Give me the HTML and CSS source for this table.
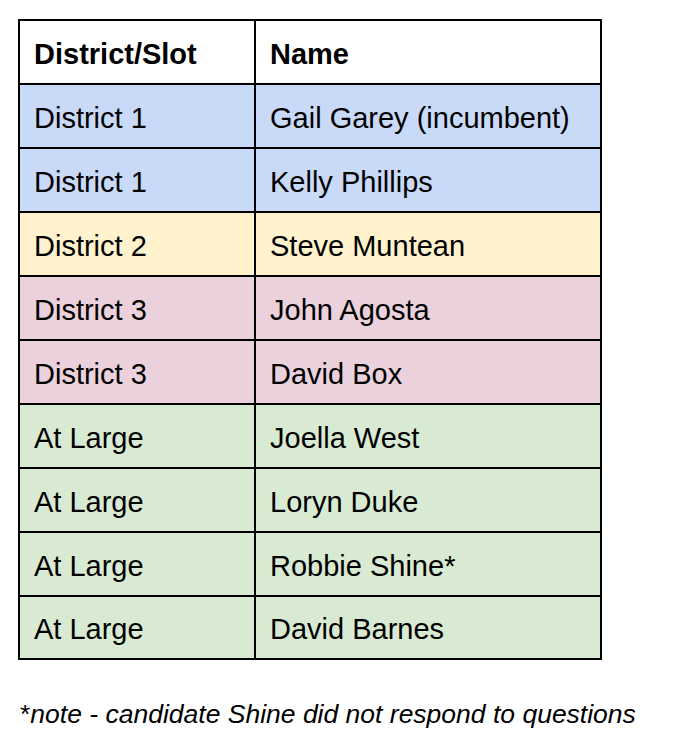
FILE: index.html
```html
<!DOCTYPE html>
<html>
<head>
<meta charset="utf-8">
<link rel="stylesheet" href="styles.css">
</head>
<body>
<table class="slate">
  <colgroup><col class="c1"><col class="c2"></colgroup>
  <tr class="head"><th>District/Slot</th><th>Name</th></tr>
  <tr class="d1"><td>District 1</td><td>Gail Garey (incumbent)</td></tr>
  <tr class="d1"><td>District 1</td><td>Kelly Phillips</td></tr>
  <tr class="d2"><td>District 2</td><td>Steve Muntean</td></tr>
  <tr class="d3"><td>District 3</td><td>John Agosta</td></tr>
  <tr class="d3"><td>District 3</td><td>David Box</td></tr>
  <tr class="al"><td>At Large</td><td>Joella West</td></tr>
  <tr class="al"><td>At Large</td><td>Loryn Duke</td></tr>
  <tr class="al"><td>At Large</td><td>Robbie Shine*</td></tr>
  <tr class="al"><td>At Large</td><td>David Barnes</td></tr>
</table>
<p class="note">*<i>note - candidate Shine did not respond to questions</i></p>
</body>
</html>
```
FILE: styles.css
```css
html, body { margin: 0; padding: 0; background: #fff; }
body { font-family: "Liberation Sans", Arial, sans-serif; color: #000; }
.slate {
  border-collapse: collapse;
  margin: 19px 0 0 18px;
  width: 582px;
  table-layout: fixed;
}
.c1 { width: 236px; }
.c2 { width: 346px; }
.slate th, .slate td {
  border: 2px solid #000;
  height: 64px;
  padding: 4px 0 0 14px;
  font-size: 29px;
  text-align: left;
  vertical-align: middle;
  white-space: nowrap;
  box-sizing: border-box;
}
.slate tr:last-child td { height: 63px; }
.slate th { font-weight: bold; }
.head { background: #fff; }
.d1 { background: #c9daf8; }
.d2 { background: #fff2cc; }
.d3 { background: #ead1dc; }
.al { background: #d9ead3; }
.note {
  margin: 39px 0 0 20px;
  font-size: 26.5px;
}
```
